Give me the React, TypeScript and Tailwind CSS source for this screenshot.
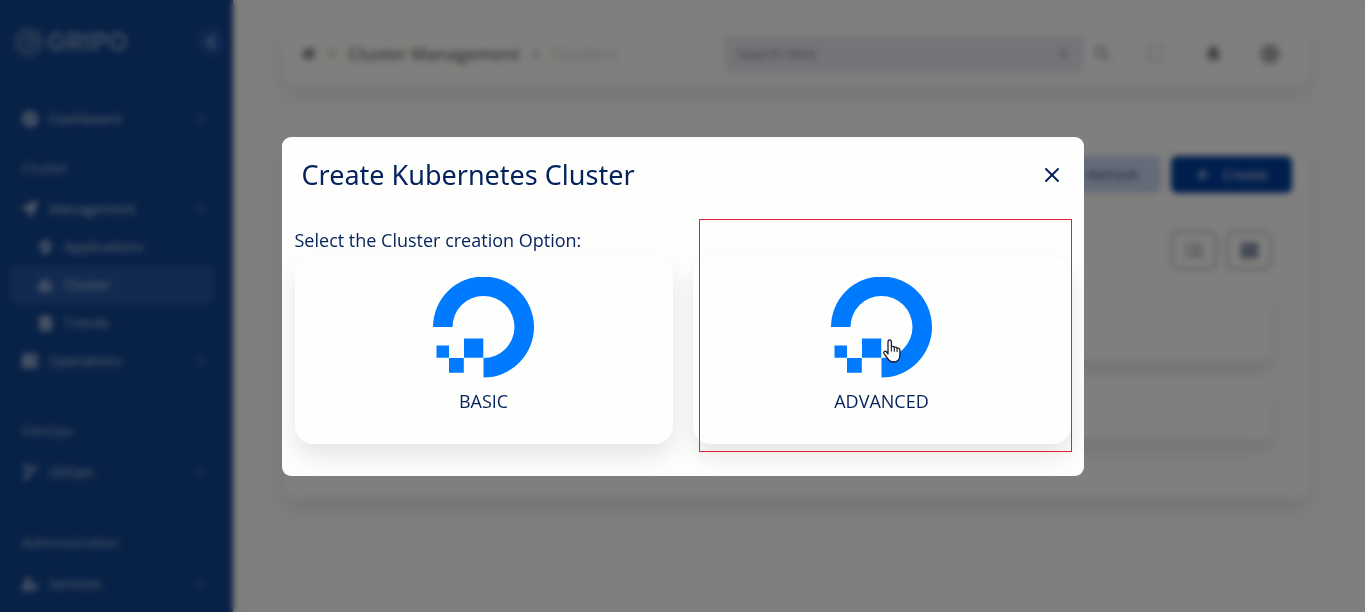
import type { ReactNode } from "react";
import {
  FaChevronLeft, FaCompass, FaHome, FaSearch, FaBell, FaGlobe, FaPlus,
  FaMapMarkerAlt, FaCubes, FaDatabase, FaServer, FaCodeBranch, FaUserCog, FaList, FaTh,
  FaChevronRight, FaChevronDown, FaLocationArrow,
} from "react-icons/fa";
import { LuMaximize, LuX } from "react-icons/lu";

function NavItem({ icon, label, open }: { icon: ReactNode; label: string; open?: boolean }) {
  return (
    <a href="#" className="mx-[10px] flex h-[38px] items-center gap-[11px] px-[12px] text-sm text-white/65">
      <span className="text-[16px]">{icon}</span>
      <span className="flex-1">{label}</span>
      <span className="pr-[5px] text-[10px] text-white/40">{open ? <FaChevronDown /> : <FaChevronRight />}</span>
    </a>
  );
}

function SubItem({ icon, label, active }: { icon: ReactNode; label: string; active?: boolean }) {
  return (
    <a
      href="#"
      className={
        "mr-[19px] ml-[10px] flex h-[38px] items-center gap-[11px] rounded-md px-[28px] text-sm text-white/65 " +
        (active ? "bg-[#2454a0]" : "")
      }
    >
      <span className="text-[15px]">{icon}</span>
      <span>{label}</span>
    </a>
  );
}

function Heading({ children }: { children: ReactNode }) {
  return <h2 className="px-[22px] text-sm leading-[20px] font-medium text-white/60">{children}</h2>;
}

function Divider() {
  return <hr className="mx-[30px] border-white/5" />;
}

function Sidebar() {
  return (
    <nav aria-label="Main" className="w-[233px] shrink-0 overflow-hidden bg-[#10428e]">
      <div className="flex h-[89px] items-center justify-between pr-[8px] pb-[5px] pl-[14px]">
        <div className="flex items-center gap-[3px] text-white/45">
          <svg width="30" height="34" viewBox="0 0 30 34" fill="none" stroke="currentColor" strokeWidth="3">
            <circle cx="15" cy="17" r="12.5" strokeDasharray="5 1.5" />
            <circle cx="15" cy="17" r="7" strokeWidth="2" />
            <path d="M15 10v7h7" strokeWidth="2" />
          </svg>
          <span className="font-['Inter'] text-[26px] leading-[32px] font-bold">GRIPO</span>
        </div>
        <button type="button" aria-label="Collapse menu" className="flex size-[28px] items-center justify-center rounded-full bg-[#2050a4] text-[16px] text-white/60">
          <FaChevronLeft />
        </button>
      </div>
      <Divider />
      <div className="pt-[10px]">
        <NavItem icon={<FaCompass />} label="Dashboard" />
      </div>
      <div className="pt-[20px] pb-[12px]"><Heading>Cluster</Heading></div>
      <NavItem icon={<FaLocationArrow />} label="Management" open />
      <SubItem icon={<FaMapMarkerAlt />} label="Applications" />
      <SubItem icon={<FaCubes />} label="Cluster" active />
      <SubItem icon={<FaDatabase />} label="Trends" />
      <NavItem icon={<FaServer />} label="Operations" />
      <div className="pt-[13px]"><Divider /></div>
      <div className="pt-[27px] pb-[12px]"><Heading>DevOps</Heading></div>
      <NavItem icon={<FaCodeBranch />} label="GitOps" />
      <div className="pt-[13px]"><Divider /></div>
      <div className="pt-[28px] pb-[12px]"><Heading>Administration</Heading></div>
      <NavItem icon={<FaUserCog />} label="Services" />
    </nav>
  );
}

function TopBar() {
  return (
    <header className="flex h-[65px] items-center rounded-xl bg-[#fefefa] pt-[2px] pr-[30px] pl-[18px] shadow-[0_12px_20px_rgba(0,0,0,0.09)]">
      <nav aria-label="Breadcrumb" className="flex flex-1 items-center gap-[12px] text-[17px] text-[#777]">
        <FaHome className="text-[15px]" />
        <span className="text-sm">&gt;</span>
        <a href="#" className="font-semibold">Cluster Management</a>
        <span className="text-sm">&gt;</span>
        <span className="text-[#ccccc8]">Clusters</span>
      </nav>
      <div className="flex h-[36px] w-[358px] items-center bg-[#e8eaf2] px-[12px]">
        <input aria-label="Search" placeholder="Search Here" className="min-w-0 flex-1 text-sm placeholder:text-[#80848e]" />
        <LuX className="text-[15px] text-[#999]" />
      </div>
      <div className="flex items-center pl-[12px] text-[17px] text-[#888]">
        <button type="button" aria-label="Find" className="text-[15px] text-[#aaa]"><FaSearch /></button>
        <button type="button" aria-label="Full screen" className="ml-[37px] text-[#999]"><LuMaximize /></button>
        <button type="button" aria-label="Notifications" className="ml-[41px]"><FaBell /></button>
        <button type="button" aria-label="Account" className="ml-[38px] text-[20px] text-[#888]"><FaGlobe /></button>
      </div>
    </header>
  );
}

function ClusterPanel() {
  return (
    <main className="mt-[52px] rounded-xl bg-[#fefefa] px-[38px] pt-[19px] pb-[58px] shadow-[0_12px_20px_rgba(0,0,0,0.09)]">
      <div className="-mr-[20px] flex justify-end gap-[10px] text-sm font-semibold">
        <button type="button" className="h-[37px] w-[96px] rounded-md bg-[#c8d6f2] text-[#5f6f96]">Refresh</button>
        <button type="button" className="flex h-[37px] w-[121px] items-center justify-center gap-[14px] rounded-md bg-[#003c9c] text-white/70">
          <FaPlus className="text-[13px]" />
          Create
        </button>
      </div>
      <div className="mt-[38px] flex justify-end gap-[9px] text-[17px]">
        <button type="button" aria-label="List view" className="flex h-[39px] w-[46px] items-center justify-center rounded-lg border-2 border-[#b4b8c2] text-[#8a90a0]"><FaList /></button>
        <button type="button" aria-label="Grid view" className="flex h-[39px] w-[46px] items-center justify-center rounded-lg border-2 border-[#b4b8c2] text-[#4a5880]"><FaTh /></button>
      </div>
      <div className="mt-[14px] h-[77px] rounded-xl shadow-[0_12px_16px_rgba(0,0,0,0.09)]" />
      <div className="mt-[17px] h-[62px] rounded-xl bg-[#fefefa] shadow-[0_12px_16px_rgba(0,0,0,0.09)]" />
    </main>
  );
}

function OceanLogo() {
  return (
    <svg width="101" height="101" viewBox="0 0 101 101" fill="#007bff" aria-hidden="true">
      <path d="M50.5 100.5V81a31 31 0 1 0-31-31H0a50.5 50.5 0 1 1 50.5 50.5z" />
      <path d="M31 61.500h19.300v19.300H31zM16 81h14.800v14.800H16zM3.500 68.500h12.500v12.300H3.500z" />
    </svg>
  );
}

function OptionCard({ label, children }: { label: string; children?: ReactNode }) {
  return (
    <div className="relative rounded-[18px] bg-[#fefefd] shadow-[0_12px_24px_rgba(0,0,0,0.10)]">
      <button type="button" className="flex w-full cursor-pointer flex-col items-center pt-[20px] pb-[31px] text-[18px] leading-[24px]">
        <OceanLogo />
        <span className="mt-[11px]">{label}</span>
      </button>
      {children}
    </div>
  );
}

function HandPointer() {
  return (
    <svg className="absolute top-[81px] left-[189px]" width="20" height="26" viewBox="0 0 20 26" aria-hidden="true">
      <path
        d="M6 16V4.200C6 1.200 9.400 1.200 9.400 4.200V9c.6-1 2.600-.8 2.900.6.700-.9 2.500-.5 2.800.8.900-.7 2.800-.2 2.800 1.600v5c0 4-2.400 7-6.600 7-3.400 0-5-2-6.400-4.600L2 15.600c-.9-1.800 1-3.200 2.500-1.800z"
        fill="#fff"
        stroke="#1a1a2a"
        strokeWidth="1.300"
        strokeLinejoin="round"
      />
      <path d="M9.400 9v4.500M12.300 9.800v4M15.100 10.600v3.400" stroke="#1a1a2a" strokeWidth="1.100" />
    </svg>
  );
}

export default function App() {
  return (
    <div className="font-['Open_Sans',sans-serif]">
      <div className="flex h-screen overflow-hidden bg-[#fefefa]">
        <Sidebar />
        <div className="min-w-0 flex-1 pt-[20px] pr-[55px] pl-[50px]">
          <TopBar />
          <ClusterPanel />
        </div>
      </div>
      <div className="fixed inset-0 flex items-center justify-center bg-black/50 backdrop-blur-[3px]">
        <section
          role="dialog"
          aria-labelledby="dialog-title"
          className="w-full max-w-[802px] overflow-hidden rounded-[9px] bg-[#fefefd] px-[13px] pb-[32px] text-[#04225c]"
        >
          <div className="flex h-[76px] items-center justify-between pr-[7px] pl-[7px]">
            <h1 id="dialog-title" className="font-['Noto_Sans',sans-serif] text-[27px] leading-[36px]">Create Kubernetes Cluster</h1>
            <button type="button" aria-label="Close" className="text-[24px]"><LuX /></button>
          </div>
          <p className="pt-[15px] text-[18px] leading-[24px]">Select the Cluster creation Option:</p>
          <div className="mt-[5px] grid grid-cols-2 gap-[20px]">
            <OptionCard label="BASIC" />
            <OptionCard label="ADVANCED">
              <div className="pointer-events-none absolute -top-[38px] -right-[1px] -bottom-[8px] left-[6px] border border-[#e0222c]" />
              <HandPointer />
            </OptionCard>
          </div>
        </section>
      </div>
    </div>
  );
}
